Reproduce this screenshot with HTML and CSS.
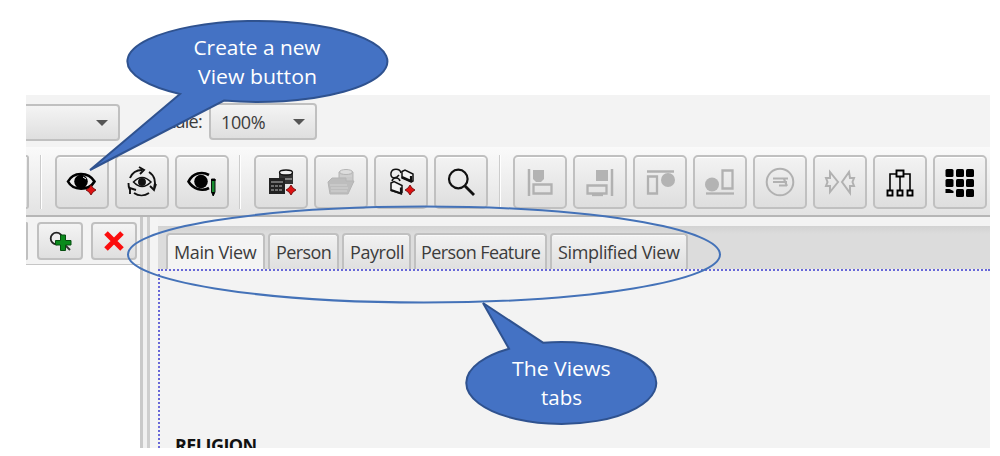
FILE: index.html
```html
<!DOCTYPE html>
<html lang="en">
<head>
<meta charset="utf-8">
<title>Views</title>
<link rel="stylesheet" href="styles.css">
</head>
<body>
<div class="app">
  <div class="options">
    <div class="combo combo-wide"><i class="caret"></i></div>
    <span class="scale-label">Scale:</span>
    <div class="combo combo-scale"><span class="zoom-value">100%</span><i class="caret"></i></div>
  </div>
  <div class="toolbar">
    <div class="btn btn-cut"></div>
    <i class="sep sep-first"></i>
    <div class="group">
      <div class="btn"><svg viewBox="0 0 54 54"><path d="M13 26.500C18 17 33 16 39.500 26.500C34 36 18 36 13 26.500Z" fill="#eee" stroke="#000" stroke-width="2.600"/><circle cx="26" cy="26.500" r="6.800"/><path d="M28 22l3 2" stroke="#fff"/><path class="plus" d="M36 30l2 3 3 2-3 2-2 3-2-3-3-2 3-2z"/></svg></div>
      <div class="btn"><svg viewBox="0 0 54 54" fill="none" stroke="#111" stroke-width="1.900"><path d="M15 23A13 13 0 0 1 27 15M34 17A13 13 0 0 1 39 33M34 38A13 13 0 0 1 19 38M15 35A13 13 0 0 1 13.500 28"/><path d="M24 12l5 3-4 4M35 31l4 4 2-6M15 39l0-6 6 2"/><path d="M18.500 27Q27 18 36 27Q27 36 18.500 27Z" stroke-width="1.500"/><circle cx="27" cy="27" r="3" fill="#111"/></svg></div>
      <div class="btn"><svg viewBox="0 0 54 54"><path d="M34 20C27 16 18 18 13.500 26.500C18 34 27 37 34 33" fill="none" stroke="#000" stroke-width="2.600"/><circle cx="26" cy="26.500" r="6.800"/><path d="M36.500 24h3.500v13l-1.800 4-1.700-4z" fill="#168b2f" stroke="#111"/><path d="M36 24h4.500v2H36zM36.500 37h3.500l-1.800 4z"/></svg></div>
    </div>
    <i class="sep sep-a"></i>
    <div class="group">
      <div class="btn"><svg viewBox="0 0 54 54"><path d="M25 17h14v12H25z" fill="#333"/><ellipse cx="32" cy="17.500" rx="6.500" ry="2.500" fill="#eee" stroke="#111" stroke-width="1.300"/><path d="M26 24h12" stroke="#ccc"/><path d="M15 23h16v16H15z" fill="#222"/><path d="M17 27h12M17 31h3m1 0h3m1 0h3M17 35h3m1 0h3m1 0h3" stroke="#bbb"/><path class="plus" d="M37 30l2 3 3 2-3 2-2 3-2-3-3-2 3-2z"/></svg></div>
      <div class="btn"><svg viewBox="0 0 54 54" stroke="#b5b5b5"><path d="M25 17h14v11H25z" fill="#c9c9c9"/><ellipse cx="32" cy="17" rx="6.500" ry="2.500" fill="#ddd"/><path d="M14 27l4-4h14v3h8l-6 13H16z" fill="#bdbdbd"/><path d="M16 30h17M17 33h17M17 36h16M26 21h12" stroke="#d3d3d3"/></svg></div>
      <div class="btn"><svg viewBox="0 0 54 54" fill="#f4f4f4" stroke="#111" stroke-width="1.500"><path d="M27 18C26 13 18 13 17 18C16 24 22 24 25 20M18 26C19 22 25 22 26 26" fill="none"/><path d="M28 16.500l3-1.500 8 4v7l-2 1-9-4z"/><path d="M28 22l9 4v-5" stroke-width="2.200" fill="none"/><path d="M17 28l3-1.500 8 4v7l-1 1-10-3z"/><path d="M17 35l10 3.500v-6" stroke-width="2.200" fill="none"/><path class="plus" d="M36 30l2 3 3 2-3 2-2 3-2-3-3-2 3-2z"/></svg></div>
      <div class="btn"><svg viewBox="0 0 54 54" fill="none" stroke="#111"><circle cx="24.300" cy="24" r="9.300" stroke-width="2.200"/><path d="M31 31l9 9" stroke-width="2.800"/></svg></div>
    </div>
    <i class="sep sep-b"></i>
    <div class="group">
      <div class="btn"><svg viewBox="0 0 54 54" class="dim"><path d="M16 14v27" stroke-width="2.500"/><path d="M20 15h11v9l-3 3h-5l-3-3z" class="solid"/><path d="M20.500 29.500h18v9h-18z"/></svg></div>
      <div class="btn"><svg viewBox="0 0 54 54" class="dim"><path d="M39 14v27" stroke-width="2.500"/><path d="M23 15h12v11H23z" class="solid"/><path d="M14.500 30.500h19v8h-19z"/><path d="M19 40h11"/></svg></div>
      <div class="btn"><svg viewBox="0 0 54 54" class="dim"><path d="M14 16.500h27" stroke-width="2.500"/><path d="M15 21.500h9v17h-9z"/><circle cx="35" cy="25" r="7" class="solid"/></svg></div>
      <div class="btn"><svg viewBox="0 0 54 54" class="dim"><path d="M13 38.500h28"/><path d="M29.500 15.500h10v18h-10z"/><circle cx="19" cy="29.500" r="7" class="solid"/></svg></div>
      <div class="btn"><svg viewBox="0 0 54 54" class="dim"><circle cx="27" cy="27" r="13.300" stroke-width="2"/><path d="M20 23.500h15M20 27h14M26 30.500h8M31 24l3 7" stroke-width="2"/></svg></div>
      <div class="btn"><svg viewBox="0 0 54 54" class="dim"><path d="M13 23h4v-6l8 10-8 10v-6h-4l1.500-4zM41 23h-4l-1-6-7 10 8 11v-7h4l-1.500-4z" stroke-width="2"/></svg></div>
      <div class="btn"><svg viewBox="0 0 54 54" fill="#eee" stroke="#000" stroke-width="1.900"><path d="M17 35V19h20v16M27 22v13" fill="none" stroke-width="1.600"/><path d="M23.500 15.500h7v6h-7zM14.500 35.500h5v5h-5zM24.500 35.500h5v5h-5zM34.500 35.500h5v5h-5z"/></svg></div>
      <div class="btn"><svg viewBox="0 0 54 54"><rect x="12.500" y="14" width="8" height="8" rx="1.500"/><rect x="23" y="14" width="8" height="8" rx="1.500"/><rect x="33" y="14" width="8" height="8" rx="1.500"/><rect x="12.500" y="24" width="8" height="8" rx="1.500"/><rect x="23" y="24" width="8" height="8" rx="1.500"/><rect x="33" y="24" width="8" height="8" rx="1.500"/><path d="M12.500 34h4l4 2v2h-8z"/><rect x="23" y="34" width="8" height="8" rx="1.500"/><rect x="33" y="34" width="8" height="8" rx="1.500"/></svg></div>
    </div>
  </div>
  <div class="work">
    <div class="side">
      <div class="side-tools">
        <div class="small small-cut"></div>
        <div class="small"><svg viewBox="0 0 46 38"><circle cx="19.500" cy="16.500" r="5.800" fill="#eee" stroke="#222" stroke-width="1.800"/><path d="M28 23l5 5" stroke="#333" stroke-width="2"/><path d="M23.500 13h5v5.500h5.500v4.500h-5.500v5.500h-5v-5.500h-5v-4.500h5z" fill="#0b8a1c" stroke="#064f10"/></svg></div>
        <div class="small"><svg viewBox="0 0 46 38"><path d="M15 11l16 16M31 11L15 27" stroke="#fb0d0d" stroke-width="5"/></svg></div>
      </div>
    </div>
    <div class="divider"></div>
    <div class="views">
      <div class="tabs">
        <div class="tab active"><span>Main View</span></div>
        <div class="tab t-person"><span>Person</span></div>
        <div class="tab t-payroll"><span>Payroll</span></div>
        <div class="tab t-feature"><span>Person Feature</span></div>
        <div class="tab t-simple"><span>Simplified View</span></div>
      </div>
      <div class="canvas"><span class="entity">RELIGION</span></div>
    </div>
  </div>
</div>
<svg class="notes" viewBox="0 0 1000 456">
  <ellipse cx="424" cy="254.500" rx="296" ry="48" class="ring"/>
  <path class="bubble" d="M180 94L90 170L224 100.600A130 40.500 0 1 0 180 94Z"/>
  <path class="bubble" d="M543 342.700L483 303L509 348.700A95 41 0 1 0 543 342.700Z"/>
  <text x="193.500" y="55" textLength="127" lengthAdjust="spacingAndGlyphs">Create a new</text>
  <text x="198" y="84" textLength="119" lengthAdjust="spacingAndGlyphs">View button</text>
  <text x="512" y="376" textLength="98.500" lengthAdjust="spacingAndGlyphs">The Views</text>
  <text x="541" y="405" textLength="41" lengthAdjust="spacingAndGlyphs">tabs</text>
</svg>
</body>
</html>
```
FILE: styles.css
```css
* { box-sizing: border-box; }
body { margin: 0; width: 1000px; height: 456px; overflow: hidden; background: #fff; position: relative; padding: 95px 10px 8px 26px; font-family: "Open Sans", "Noto Sans", sans-serif; color: #3c3c3c; }
.app { height: 353px; overflow: hidden; background: #f3f3f3; display: flex; flex-direction: column; }
.options { height: 52px; flex: none; display: flex; align-items: flex-start; padding-top: 8px; font-size: 18px; line-height: 36px; }
.combo { height: 37px; border: 2px solid #c0c0c0; border-radius: 4px; background: linear-gradient(#f4f4f4, #dfdfdf); display: flex; align-items: center; justify-content: space-between; padding: 0 10px; }
.combo-wide { width: 94px; margin-top: 1px; border-left: 0; border-radius: 0 4px 4px 0; justify-content: flex-end; }
.combo-scale { width: 108px; }
.caret { border: 6px solid transparent; border-top-color: #555; border-bottom: 0; }
.scale-label { width: 44px; margin-left: 38px; margin-right: 7px; display: flex; justify-content: flex-end; letter-spacing: -.7px; white-space: nowrap; }
.zoom-value { letter-spacing: -.4px; }
.toolbar { height: 70px; flex: none; display: flex; padding-top: 8px; background: linear-gradient(#fafafa, #e3e3e3); border-bottom: 2px solid #b6b6b6; }
.group { display: flex; gap: 6px; }
.btn { width: 54px; height: 54px; flex: none; border: 2px solid #c0c0c0; border-radius: 5px; background: linear-gradient(#f3f3f3, #dedede); box-shadow: inset 0 1px #fff; }
.btn svg { display: block; width: 54px; height: 54px; margin: -2px; }
.btn-cut { width: 3px; border-left: 0; border-radius: 0 5px 5px 0; }
.sep { width: 2px; height: 54px; flex: none; background: #ccc; border-right: 1px solid #fff; }
.sep-first { margin: 0 13px 0 11px; }
.sep-a { margin: 0 13px 0 10px; }
.sep-b { margin: 0 12px 0 11px; }
.plus { fill: #df1212; stroke: #600; stroke-width: .8; }
.dim { fill: none; stroke: #b1b1b1; stroke-width: 2.3; }
.solid { fill: #b3b3b3; stroke: none; }
.work { flex: 1; display: flex; min-height: 0; }
.side { width: 114px; background: #fff; }
.side-tools { height: 48px; display: flex; gap: 9px; padding-top: 5px; background: #f3f3f3; border-bottom: 1px solid #c6c6c6; }
.small { width: 46px; height: 38px; flex: none; border: 2px solid #c0c0c0; border-radius: 4px; background: linear-gradient(#f4f4f4, #dfdfdf); }
.small svg { display: block; width: 46px; height: 38px; margin: -2px; }
.small-cut { width: 2px; border-left: 0; border-radius: 0 4px 4px 0; }
.small + .small + .small { margin-left: -1px; }
.divider { width: 18px; background: linear-gradient(90deg, #c9c9c9 0 3px, #f0f0f0 3px 7px, #cecece 7px 10px, #f4f4f4 10px); }
.views { flex: 1; display: flex; flex-direction: column; padding-top: 9px; min-width: 0; }
.tabs { height: 43px; flex: none; display: flex; align-items: flex-end; background: linear-gradient(#d2d2d2, #dcdcdc 8px); padding-left: 8px; gap: 3px; }
.tab { height: 36px; border: 2px solid #c0c0c0; border-bottom: 0; border-radius: 4px 4px 0 0; background: linear-gradient(#f2f2f2, #dfdfdf); box-shadow: inset 0 1px #fafafa; font-size: 18px; line-height: 34px; white-space: nowrap; padding-left: 6px; }
.active { width: 99px; background: #f4f4f4; letter-spacing: -.4px; }
.t-person { width: 71px; letter-spacing: -.6px; }
.t-payroll { width: 69px; letter-spacing: -.45px; }
.t-feature { width: 133px; padding-left: 5px; letter-spacing: -.6px; }
.t-simple { width: 138px; letter-spacing: -.35px; }
.canvas { flex: 1; min-height: 0; overflow: hidden; border-top: 2px dotted #6868d8; border-left: 2px dotted #6868d8; padding: 162px 0 0 15px; font-size: 18px; line-height: 24px; font-weight: 700; color: #111; letter-spacing: -.55px; }
.notes { position: absolute; left: 0; top: 0; width: 1000px; height: 456px; }
.notes text { fill: #fff; font-family: "Open Sans", "Noto Sans", sans-serif; font-size: 20px; }
.ring { fill: none; stroke: #4472b8; stroke-width: 2; }
.bubble { fill: #4472c4; stroke: #2f528f; stroke-width: 2; }
```
